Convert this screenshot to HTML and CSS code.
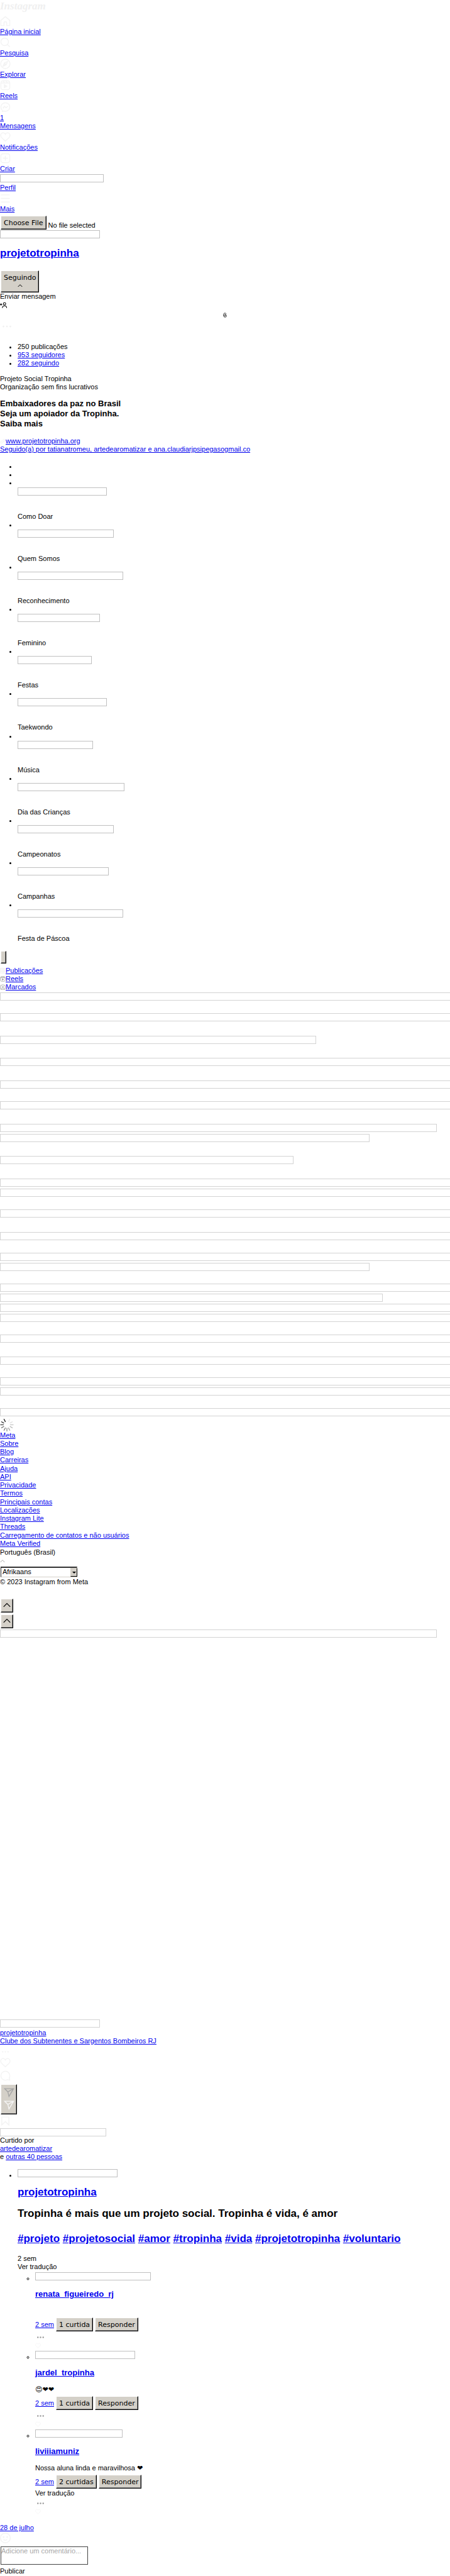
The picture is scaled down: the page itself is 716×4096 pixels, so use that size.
FILE: index.html
```html
<!DOCTYPE html>
<html lang="pt-BR">
<head>
<meta charset="utf-8">
<title>projetotropinha</title>
<link rel="stylesheet" href="styles.css">
</head>
<body>
<header>
  <div class="logo">Instagram</div>
  <nav class="menu">
    <a class="item" href="#"><svg class="icon" viewBox="0 0 24 24"><path d="M9 22V16.500a3 3 0 0 1 6 0V22h7V10.500L12 2 2 10.500V22z"/></svg><span>Página inicial</span></a>
    <a class="item" href="#"><svg class="icon" viewBox="0 0 24 24"><circle cx="10.500" cy="10.500" r="8.500"/><path d="M16.500 16.500 22 22"/></svg><span>Pesquisa</span></a>
    <a class="item" href="#"><svg class="icon" viewBox="0 0 24 24"><circle cx="12" cy="12" r="10.500"/><path d="M13.900 13.900 7.100 17 10.100 10.100 17 7z"/><path class="solid" d="M10.100 10.100 13.900 13.900 7.100 17z"/></svg><span>Explorar</span></a>
    <a class="item item-spaced" href="#"><svg class="icon" viewBox="0 0 24 24"><rect x="2" y="2" width="20" height="20" rx="5"/><path d="M2 7h20M13.500 2l3 5M7.200 2.200 10 7"/><path class="solid" d="M9.800 11v6.500l5.600-3.200z"/></svg><span>Reels</span></a>
    <a class="item" href="#"><svg class="icon" viewBox="0 0 24 24"><path d="M12 2C6.300 2 2 6.200 2 11.700c0 2.900 1.200 5.400 3.100 7.100v3l3-1.300c1.200.4 2.500.6 3.900.6 5.700 0 10-4 10-9.500S17.700 2 12 2z"/><path d="M6.500 14.500l3.600-4.500 3.600 3 3.800-3.500"/></svg><span>1</span><span>Mensagens</span></a>
    <a class="item" href="#"><svg class="icon" viewBox="0 0 24 24"><path d="M16.800 3A6 6 0 0 0 12 6.200 6 6 0 0 0 7.200 3C4 3 1.500 5.700 1.500 9c0 4 3.500 6 6 8.500L12 21.500l4.500-4C19 15 22.500 13 22.500 9c0-3.300-2.500-6-5.700-6z"/></svg><span>Notificações</span></a>
    <a class="item" href="#"><svg class="icon" viewBox="0 0 24 24"><rect x="2" y="2" width="20" height="20" rx="5"/><path d="M6.500 12h11M12 6.500v11"/></svg><span>Criar</span></a>
    <a class="profile" href="#"><span class="frame w-profile"></span><span>Perfil</span></a>
    <a class="item" href="#"><svg class="icon" viewBox="0 0 24 24"><path d="M2 4h20M2 12h20M2 20h20"/></svg><span>Mais</span></a>
  </nav>
  <div class="upload">
    <input class="hidden-input" type="file" id="file">
    <label class="bevel" for="file">Choose File</label><span>No file selected</span>
  </div>
  <div class="frame w-base avatar"></div>
</header>

<section class="about">
  <h2><a href="#">projetotropinha</a></h2>
  <button class="bevel follow" type="button">Seguindo<svg class="chevron" viewBox="0 0 12 8"><path d="M1 7l5-5 5 5"/></svg></button>
  <div>Enviar mensagem</div>
  <svg class="add-user" viewBox="0 0 16 16"><path d="M0 6h5M2.500 3.500v5"/><circle cx="10.500" cy="4.500" r="2.800"/><path d="M5.500 14c0-3.500 2-5 5-5s5 1.500 5 5"/></svg>
  <svg class="threads" viewBox="0 0 20 22"><path d="M15.500 6.500C14.500 3.500 12.500 2 10 2 5.500 2 3 5.500 3 11s2.500 9 7 9c4 0 7-2 7-5s-3-4.500-6.500-4.500c-2.500 0-4 1-4 2.800 0 3.400 7 3.400 7-1.300C13.500 8 12 7 10 7 8.500 7 7.500 7.500 7 8.500"/></svg>
  <svg class="options" viewBox="0 0 32 32"><circle cx="8" cy="16" r="2"/><circle cx="16" cy="16" r="2"/><circle cx="24" cy="16" r="2"/></svg>
  <ul class="counts">
    <li>250 publicações</li>
    <li><a href="#">953 seguidores</a></li>
    <li><a href="#">282 seguindo</a></li>
  </ul>
  <div>Projeto Social Tropinha</div>
  <div>Organização sem fins lucrativos</div>
  <h1>Embaixadores da paz no Brasil<br>Seja um apoiador da Tropinha.<br>Saiba mais</h1>
  <div class="icon-line"><svg class="mini pale" viewBox="0 0 12 12"><path d="M5 7.500a2 2 0 0 1 0-3l2-2a2 2 0 0 1 3 3L8.500 7M7 4.500a2 2 0 0 1 0 3l-2 2a2 2 0 0 1-3-3L3.500 5"/></svg><a href="#">www.projetotropinha.org</a></div>
  <div><a href="#">Seguido(a) por tatianatromeu, artedearomatizar e ana.claudiarjpsipegasogmail.co</a></div>
</section>

<ul class="stories">
  <li></li>
  <li></li>
  <li><div>&nbsp;</div><div class="frame w-doar"></div><div class="name">Como Doar</div></li>
  <li><div>&nbsp;</div><div class="frame w-somos"></div><div class="name">Quem Somos</div></li>
  <li><div>&nbsp;</div><div class="frame w-wide"></div><div class="name">Reconhecimento</div></li>
  <li><div>&nbsp;</div><div class="frame w-feminino"></div><div class="name">Feminino</div></li>
  <li><div>&nbsp;</div><div class="frame w-festas"></div><div class="name">Festas</div></li>
  <li class="item-spaced"><div>&nbsp;</div><div class="frame w-doar"></div><div class="name">Taekwondo</div></li>
  <li><div>&nbsp;</div><div class="frame w-musica"></div><div class="name">Música</div></li>
  <li><div>&nbsp;</div><div class="frame w-criancas"></div><div class="name">Dia das Crianças</div></li>
  <li><div>&nbsp;</div><div class="frame w-somos"></div><div class="name">Campeonatos</div></li>
  <li><div>&nbsp;</div><div class="frame w-campanhas"></div><div class="name">Campanhas</div></li>
  <li><div>&nbsp;</div><div class="frame w-wide"></div><div class="name">Festa de Páscoa</div></li>
</ul>
<button class="bevel next" type="button" aria-label="Avançar"></button>

<nav class="tabs">
  <a href="#"><svg class="mini pale" viewBox="0 0 24 24"><rect x="2" y="2" width="20" height="20"/><path d="M8.700 2v20M15.300 2v20M2 8.700h20M2 15.300h20"/></svg>Publicações</a>
  <a href="#"><svg class="mini" viewBox="0 0 24 24"><rect x="2" y="2" width="20" height="20" rx="5"/><path d="M2 7h20M13.500 2l3 5M7.200 2.200 10 7"/><path class="solid" d="M9.800 11v6.500l5.600-3.200z"/></svg>Reels</a>
  <a href="#"><svg class="mini" viewBox="0 0 24 24"><path d="M8 4l4-3 4 3h3a3 3 0 0 1 3 3v12a3 3 0 0 1-3 3H5a3 3 0 0 1-3-3V7a3 3 0 0 1 3-3z"/><circle cx="12" cy="11" r="3"/><path d="M6 21c0-4 2-5 6-5s6 1 6 5"/></svg>Marcados</a>
</nav>

<div class="posts">
  <div class="frame open gap-m"></div>
  <div class="frame open gap-l"></div>
  <div class="frame w-post-c gap-ml"></div>
  <div class="frame open gap-l"></div>
  <div class="frame open gap-m"></div>
  <div class="frame open gap-l"></div>
  <div class="frame w-post-a gap-s"></div>
  <div class="frame w-post-b gap-ml"></div>
  <div class="frame w-post-d gap-l"></div>
  <div class="frame open gap-s"></div>
  <div class="frame open gap-m"></div>
  <div class="frame open gap-l"></div>
  <div class="frame open gap-m"></div>
  <div class="frame open gap-s"></div>
  <div class="frame w-post-b gap-m"></div>
  <div class="frame open gap-s"></div>
  <div class="frame w-post-e gap-s"></div>
  <div class="frame open gap-s"></div>
  <div class="frame open gap-m"></div>
  <div class="frame open gap-ml"></div>
  <div class="frame open gap-m"></div>
  <div class="frame open gap-s"></div>
  <div class="frame open gap-m"></div>
  <div class="frame open gap-s"></div>
</div>
<svg class="spinner" viewBox="0 0 100 100"><g fill="none" stroke-width="6"><path stroke="#ededed" d="M61 28 73 6"/><path stroke="#dedede" d="M72 38 93 26"/><path stroke="#c4c4c4" d="M74 50h26"/><path stroke="#b0b0b0" d="M72 62 93 74"/><path stroke="#a0a0a0" d="M61 72 73 94"/><path stroke="#888" d="M50 74v26"/><path stroke="#777" d="M39 72 27 94"/><path stroke="#666" d="M28 62 7 74"/><path stroke="#444" d="M26 50H0"/><path stroke="#222" d="M28 38 7 26"/><path stroke="#111" d="M39 28 27 6"/></g></svg>

<footer>
  <ul class="links">
    <li><a href="#">Meta</a></li>
    <li><a href="#">Sobre</a></li>
    <li><a href="#">Blog</a></li>
    <li><a href="#">Carreiras</a></li>
    <li><a href="#">Ajuda</a></li>
    <li><a href="#">API</a></li>
    <li><a href="#">Privacidade</a></li>
    <li><a href="#">Termos</a></li>
    <li><a href="#">Principais contas</a></li>
    <li><a href="#">Localizações</a></li>
    <li><a href="#">Instagram Lite</a></li>
    <li><a href="#">Threads</a></li>
    <li><a href="#">Carregamento de contatos e não usuários</a></li>
    <li><a href="#">Meta Verified</a></li>
  </ul>
  <label class="language" for="lang">Português (Brasil)</label>
  <svg class="chevron chevron-pale" viewBox="0 0 12 8"><path d="M1 7l5-5 5 5"/></svg>
  <div class="picker">
    <select id="lang"><option>Afrikaans</option></select>
    <span class="arrow"></span>
  </div>
  <div>© 2023 Instagram from Meta</div>
</footer>

<div class="arrows">
  <button class="bevel" type="button" aria-label="Voltar"><svg viewBox="0 0 24 16"><path d="M3 13l9-9 9 9"/></svg></button>
  <button class="bevel" type="button" aria-label="Avançar"><svg viewBox="0 0 24 16"><path d="M3 13l9-9 9 9"/></svg></button>
</div>

<article>
  <div class="frame light w-post-a"></div>
  <div class="video"></div>
  <div class="frame light w-base"></div>
  <div class="author">
    <div><a href="#">projetotropinha</a></div>
    <div><a href="#">Clube dos Subtenentes e Sargentos Bombeiros RJ</a></div>
  </div>
  <div class="reactions">
    <svg class="icon dots" viewBox="0 0 24 24"><circle cx="6" cy="12" r="1.500"/><circle cx="12" cy="12" r="1.500"/><circle cx="18" cy="12" r="1.500"/></svg>
    <svg class="icon" viewBox="0 0 24 24"><path d="M16.800 3A6 6 0 0 0 12 6.200 6 6 0 0 0 7.200 3C4 3 1.500 5.700 1.500 9c0 4 3.500 6 6 8.500L12 21.500l4.500-4C19 15 22.500 13 22.500 9c0-3.300-2.500-6-5.700-6z"/></svg>
    <svg class="icon comment-icon" viewBox="0 0 24 24"><path d="M20.700 17A10 10 0 1 0 17 20.700L22 22z"/></svg>
    <button class="bevel share" type="button" aria-label="Compartilhar">
      <svg class="icon plane-dark" viewBox="0 0 24 24"><path d="M22 3 9.200 10.100M11.700 20.300 22 3H2l7.200 7.100z"/></svg>
      <svg class="icon plane-light" viewBox="0 0 24 24"><path d="M22 3 9.200 10.100M11.700 20.300 22 3H2l7.200 7.100z"/></svg>
    </button>
    <svg class="icon bookmark" viewBox="0 0 24 24"><path d="M20 21l-8-7.500L4 21V3h16z"/></svg>
  </div>
  <div class="frame light w-liked"></div>
  <div>Curtido por</div>
  <div><a href="#">artedearomatizar</a></div>
  <div>e <a href="#">outras 40 pessoas</a></div>

  <ul class="thread">
    <li>
      <span class="frame inline w-base"></span>
      <h2><a href="#">projetotropinha</a></h2>
      <div class="caption">Tropinha é mais que um projeto social. Tropinha é vida, é amor<br><br><a href="#">#projeto</a> <a href="#">#projetosocial</a> <a href="#">#amor</a> <a href="#">#tropinha</a> <a href="#">#vida</a> <a href="#">#projetotropinha</a> <a href="#">#voluntario</a></div>
      <div>2 sem</div>
      <div>Ver tradução</div>
      <ul class="replies">
        <li>
          <span class="frame inline w-renata"></span>
          <h3><a href="#">renata_figueiredo_rj</a></h3>
          <p class="text"></p>
          <div class="actions"><a href="#">2 sem</a><button class="bevel" type="button">1 curtida</button><button class="bevel" type="button">Responder</button></div>
          <svg class="icon dots dots-dark" viewBox="0 0 24 24"><circle cx="6" cy="12" r="1.700"/><circle cx="12" cy="12" r="1.700"/><circle cx="18" cy="12" r="1.700"/></svg>
          <svg class="like" viewBox="0 0 24 24"><path d="M16.800 3A6 6 0 0 0 12 6.200 6 6 0 0 0 7.200 3C4 3 1.500 5.700 1.500 9c0 4 3.500 6 6 8.500L12 21.500l4.500-4C19 15 22.500 13 22.500 9c0-3.300-2.500-6-5.700-6z"/></svg>
        </li>
        <li>
          <span class="frame inline w-base"></span>
          <h3><a href="#">jardel_tropinha</a></h3>
          <p class="text"><span class="emoji">😍&#xFE0E;❤&#xFE0E;❤&#xFE0E;</span></p>
          <div class="actions"><a href="#">2 sem</a><button class="bevel" type="button">1 curtida</button><button class="bevel" type="button">Responder</button></div>
          <svg class="icon dots dots-dark" viewBox="0 0 24 24"><circle cx="6" cy="12" r="1.700"/><circle cx="12" cy="12" r="1.700"/><circle cx="18" cy="12" r="1.700"/></svg>
          <svg class="like" viewBox="0 0 24 24"><path d="M16.800 3A6 6 0 0 0 12 6.200 6 6 0 0 0 7.200 3C4 3 1.500 5.700 1.500 9c0 4 3.500 6 6 8.500L12 21.500l4.500-4C19 15 22.500 13 22.500 9c0-3.300-2.500-6-5.700-6z"/></svg>
        </li>
        <li>
          <span class="frame inline w-livia"></span>
          <h3><a href="#">liviiiamuniz</a></h3>
          <p class="text">Nossa aluna linda e maravilhosa <span class="emoji">❤&#xFE0E;</span></p>
          <div class="actions"><a href="#">2 sem</a><button class="bevel" type="button">2 curtidas</button><button class="bevel" type="button">Responder</button></div>
          <div>Ver tradução</div>
          <svg class="icon dots dots-dark" viewBox="0 0 24 24"><circle cx="6" cy="12" r="1.700"/><circle cx="12" cy="12" r="1.700"/><circle cx="18" cy="12" r="1.700"/></svg>
          <svg class="like" viewBox="0 0 24 24"><path d="M16.800 3A6 6 0 0 0 12 6.200 6 6 0 0 0 7.200 3C4 3 1.500 5.700 1.500 9c0 4 3.500 6 6 8.500L12 21.500l4.500-4C19 15 22.500 13 22.500 9c0-3.300-2.500-6-5.700-6z"/></svg>
        </li>
      </ul>
    </li>
  </ul>
  <div class="date"><a href="#">28 de julho</a></div>
  <svg class="icon smile" viewBox="0 0 24 24"><circle cx="12" cy="12" r="11"/><path d="M8 15c2 3 6 3 8 0"/><circle class="solid" cx="8" cy="10" r="1"/><circle class="solid" cx="16" cy="10" r="1"/></svg>
  <textarea class="compose" aria-label="Adicione um comentário" placeholder="Adicione um comentário..."></textarea>
  <div>Publicar</div>
</article>
</body>
</html>
```
FILE: styles.css
```css
* { box-sizing: border-box; }

body {
  margin: 0;
  padding-bottom: 2px;
  background: #fff;
  color: #000;
  font: 11px/13px "Liberation Sans", Arial, sans-serif;
}

a { color: #00e; }
ul { margin: 0; padding: 0 0 0 28px; }
p { margin: 0; }

h1 { margin: 12px 0 13px; font-size: 13px; line-height: 16px; }
h2 { margin: 0; font-size: 17px; line-height: 20px; }
h3 { margin: 11px 0 13px; font-size: 13px; line-height: 15px; }

svg { display: block; fill: none; stroke: #f3f3f3; stroke-width: 2; }
.icon { width: 17px; height: 17px; }
.solid { fill: #f3f3f3; }

/* Empty picture placeholders */
.frame { display: block; height: 13px; border: 1px solid #c0c0c0; }
.inline { display: inline-block; }
.light, .posts .frame { border-color: #d3d3d3; }
.posts .open { border-right: 0; }
.w-profile { width: 165px; }
.w-base { width: 159px; }
.w-doar { width: 142px; }
.w-somos { width: 153px; }
.w-wide { width: 168px; }
.w-feminino { width: 131px; }
.w-festas { width: 118px; }
.w-musica { width: 120px; }
.w-criancas { width: 170px; }
.w-campanhas { width: 145px; }
.w-liked { width: 169px; }
.w-renata { width: 184px; }
.w-livia { width: 139px; }
.w-post-a { width: 695px; }
.w-post-b { width: 588px; }
.w-post-c { width: 503px; }
.w-post-d { width: 467px; }
.w-post-e { width: 609px; }

.gap-s { margin-bottom: 3px; }
.gap-m { margin-bottom: 20px; }
.gap-ml { margin-bottom: 22px; }
.gap-l { margin-bottom: 23px; }

/* Raised grey controls */
.bevel {
  display: inline-flex;
  align-items: center;
  justify-content: center;
  height: 22px;
  margin: 0;
  padding: 0 4px;
  border: 1px solid #000;
  border-top-color: #fff;
  border-left-color: #fff;
  box-shadow: inset -1px -1px #808080;
  background: #d4d0c8;
  color: #000;
  font: 11px/13px "DejaVu Sans", sans-serif;
}

/* Header */
.logo { height: 23px; color: #f0f0f0; font: italic bold 17px/20px "Liberation Serif", serif; }
.item { display: flex; flex-direction: column; align-items: flex-start; padding-top: 2px; }
.item .icon { margin-bottom: 2px; }
.item-spaced { margin-bottom: 1px; }
.profile { display: flex; flex-direction: column; align-items: flex-start; gap: 2px; padding-top: 2px; }
.upload { display: flex; align-items: flex-end; gap: 3px; padding: 4px 0 0 1px; }
.hidden-input { position: absolute; width: 1px; height: 1px; opacity: 0; }
.avatar { margin: 1px 0 14px; }

/* Profile summary */
.follow { flex-direction: column; height: 35px; margin: 17px 0 0 1px; }
.about .follow { display: flex; }
.chevron { width: 8px; height: 6px; margin: 3px 0; stroke: #000; stroke-width: 1.5; }
.chevron-pale { margin: 4px 0 6px; stroke: #aaa; }
.add-user { width: 11px; height: 11px; margin: 2px 0 6px; stroke: #000; stroke-width: 1.5; }
.threads { width: 8px; height: 8px; margin: 0 auto 3px; stroke: #000; }
.options { width: 22px; height: 22px; margin-bottom: 15px; }
.options circle, .dots circle { fill: #f0f0f0; stroke: none; }
.counts { margin-bottom: 12px; }
.icon-line, .tabs a { display: flex; align-items: center; }
.mini { width: 9px; height: 9px; stroke: #999; }
.mini .solid { fill: #999; }
.icon-line .mini { stroke-width: 1; }
.mini.pale { stroke: #eee; }

/* Highlights */
.stories { margin: 14px 0 13px; }
.stories li { min-height: 13px; }
.stories .frame { margin: 1px 0 27px; }
.next { display: flex; width: 9px; height: 20px; margin: 0 0 5px 1px; padding: 0; }
.tabs { display: grid; justify-items: start; margin-bottom: 2px; }
.spinner { width: 22px; height: 21px; }

/* Footer */
.links { padding: 0; list-style: none; }
.links li:nth-child(4n) { margin-bottom: 1px; }
.language { display: block; margin-top: 1px; }
.picker { position: relative; width: 122px; margin: 0 0 1px 1px; }
.picker select {
  display: block;
  width: 100%;
  height: 17px;
  padding: 0 0 2px 2px;
  border: 1px solid #d4d0c8;
  border-top: 2px solid #333;
  border-left: 1px solid #222;
  border-radius: 0;
  background: #fff;
  color: #000;
  font: 11px/13px "Liberation Sans", Arial, sans-serif;
  appearance: none;
}
.arrow {
  position: absolute;
  top: 2px;
  right: 0;
  display: grid;
  place-items: center;
  width: 11px;
  height: 14px;
  border: 1px solid #000;
  border-top-color: #d4d0c8;
  border-left-color: #d4d0c8;
  background: #d4d0c8;
  pointer-events: none;
}
.arrow::after { content: ""; border: 3px solid transparent; border-top-color: #000; border-bottom: 0; }
.arrows { display: grid; justify-items: start; gap: 3px; margin: 20px 0 2px 1px; }
.arrows .bevel { width: 20px; padding: 0; }
.arrows svg { width: 14px; height: 10px; margin-bottom: 2px; stroke: #000; }

/* Post */
.video { aspect-ratio: 716 / 607; }
.author { margin: 2px 0; }
.comment-icon { margin: 4px 0 5px; }
.share { display: flex; flex-direction: column; gap: 3px; width: 26px; height: 48px; margin: 0 0 2px 1px; padding: 0 0 2px; }
.plane-dark { stroke: #a5a5a5; }
.plane-light { stroke: #f5f5f5; }
.bookmark { margin-bottom: 3px; }
.thread { margin-top: 13px; }
.thread h2 { margin: 11px 0 14px; }
.caption { margin-bottom: 15px; font-size: 17px; font-weight: bold; line-height: 20px; }
.replies { margin-top: 2px; list-style: circle; }
.replies > li { margin-bottom: 4px; }
.text { min-height: 13px; margin-bottom: 4px; }
.emoji { font-family: "DejaVu Sans", sans-serif; line-height: 1px; }
.actions { display: flex; align-items: baseline; gap: 3px; margin-bottom: 1px; }
.dots-dark { margin-top: 1px; }
.actions + .dots-dark { margin-top: 0; }
.dots-dark circle { fill: #999; }
.like { width: 9px; height: 9px; }
.date { margin: 15px 0 1px; }
.compose {
  display: block;
  width: 139px;
  height: 29px;
  margin: 5px 0 4px 1px;
  padding: 0;
  border: 1px solid #444;
  border-radius: 0;
  font: 11px/13px "Liberation Sans", Arial, sans-serif;
  resize: none;
}
.compose::placeholder { color: #a9a9a9; }
```
